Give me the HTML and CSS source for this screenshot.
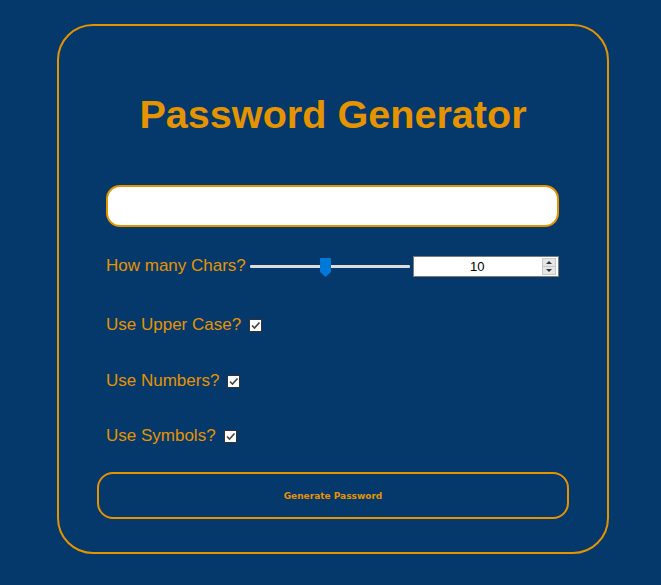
FILE: index.html
```html
<!DOCTYPE html>
<html lang="en">
<head>
<meta charset="utf-8">
<title>Password Generator</title>
<link rel="stylesheet" href="styles.css">
</head>
<body>
<div class="card">
  <h1 class="title">Password Generator</h1>
  <div class="content">
    <input class="output" type="text" readonly>
    <div class="row row-chars">
      <label class="label" for="len">How many Chars?</label>
      <input class="range" id="range" type="range" min="1" max="20" value="10">
      <span class="num-wrap">
        <input class="num" id="len" type="number" value="10" min="1" max="20">
        <span class="spin"><span class="spin-btn up"></span><span class="spin-btn down"></span></span>
      </span>
    </div>
    <div class="row row-upper">
      <label class="label" for="upper">Use Upper Case?</label>
      <input class="check" id="upper" type="checkbox" checked>
    </div>
    <div class="row row-numbers">
      <label class="label" for="numbers">Use Numbers?</label>
      <input class="check" id="numbers" type="checkbox" checked>
    </div>
    <div class="row row-symbols">
      <label class="label" for="symbols">Use Symbols?</label>
      <input class="check" id="symbols" type="checkbox" checked>
    </div>
  </div>
  <button class="generate" type="button">Generate Password</button>
</div>
</body>
</html>
```
FILE: styles.css
```css
html, body {
  margin: 0;
  padding: 0;
  background: #05386b;
}
body {
  font-family: "Liberation Sans", Arial, sans-serif;
  color: #e59400;
  height: 585px;
  overflow: hidden;
}
.card {
  box-sizing: border-box;
  width: 552px;
  height: 530px;
  margin: 24px 0 0 57px;
  border: 2px solid #e59400;
  border-radius: 36px;
  padding: 65px 38px 0;
}
.title {
  margin: 0;
  font-size: 39.6px;
  line-height: 46px;
  font-weight: bold;
  text-align: center;
  color: #e59400;
}
.content {
  margin: 48px 9px 0;
}
.output {
  display: block;
  box-sizing: border-box;
  width: 453px;
  height: 42px;
  border: 2px solid #e59400;
  border-radius: 14px;
  background: #fff;
  outline: none;
  margin: 0;
}
.row {
  display: flex;
  align-items: center;
  height: 20px;
}
.row-chars { margin-top: 29px; }
.row-upper { margin-top: 39px; }
.row-numbers { margin-top: 36px; }
.row-symbols { margin-top: 35px; }
.label {
  font-size: 17px;
  color: #e59400;
  white-space: nowrap;
  flex-shrink: 0;
}
.range {
  -webkit-appearance: none;
  appearance: none;
  flex-shrink: 0;
  width: 160px;
  height: 20px;
  margin: 0 3px 0 4px;
  background: transparent;
  padding: 0;
}
.range::-webkit-slider-runnable-track {
  height: 3px;
  background: #dcdcdc;
  border-radius: 1px;
}
.range::-webkit-slider-thumb {
  -webkit-appearance: none;
  appearance: none;
  width: 11px;
  height: 19px;
  margin-top: -7px;
  background: url("data:image/svg+xml,%3Csvg xmlns='http://www.w3.org/2000/svg' width='11' height='19'%3E%3Cpath d='M1 0H10Q11 0 11 1V14L5.5 19L0 14V1Q0 0 1 0Z' fill='%230078d7'/%3E%3C/svg%3E") no-repeat;
  border: none;
}
.num-wrap {
  position: relative;
  display: block;
  flex-shrink: 0;
}
.num {
  -moz-appearance: textfield;
  display: block;
  box-sizing: border-box;
  width: 146px;
  height: 21px;
  margin: 0;
  border: 1px solid #7a7a7a;
  background: #fff;
  font-family: "Liberation Sans", Arial, sans-serif;
  font-size: 13px;
  color: #000;
  text-align: center;
  padding: 0 17px 0 0;
  outline: none;
}
.num::-webkit-inner-spin-button,
.num::-webkit-outer-spin-button {
  -webkit-appearance: none;
  margin: 0;
}
.spin {
  position: absolute;
  right: 3px;
  top: 2px;
  width: 14px;
  height: 17px;
  display: flex;
  flex-direction: column;
}
.spin-btn {
  flex: 1;
  background: #e6e6e6;
  border: 1px solid #c8c8c8;
  position: relative;
}
.spin-btn.up { border-bottom: none; }
.spin-btn::after {
  content: "";
  position: absolute;
  left: 3px;
  border-left: 3px solid transparent;
  border-right: 3px solid transparent;
}
.spin-btn.up::after {
  top: 2px;
  border-bottom: 3px solid #333;
}
.spin-btn.down::after {
  top: 2px;
  border-top: 3px solid #333;
}
.check {
  -webkit-appearance: none;
  appearance: none;
  box-sizing: border-box;
  flex-shrink: 0;
  width: 13px;
  height: 13px;
  margin: 0 0 0 8px;
  border: 1px solid #333;
  background: #fff url("data:image/svg+xml,%3Csvg xmlns='http://www.w3.org/2000/svg' width='11' height='11'%3E%3Cpath d='M2 5.5L4.5 8L9.5 2.5' fill='none' stroke='%23444' stroke-width='1.6'/%3E%3C/svg%3E") no-repeat center;
}
.generate {
  display: block;
  box-sizing: border-box;
  width: 472px;
  height: 47px;
  margin: 26px 0 0;
  border: 2px solid #e59400;
  border-radius: 16px;
  background: transparent;
  color: #e59400;
  font-family: "DejaVu Sans", Verdana, sans-serif;
  font-size: 9px;
  font-weight: bold;
  padding: 0;
}
```
